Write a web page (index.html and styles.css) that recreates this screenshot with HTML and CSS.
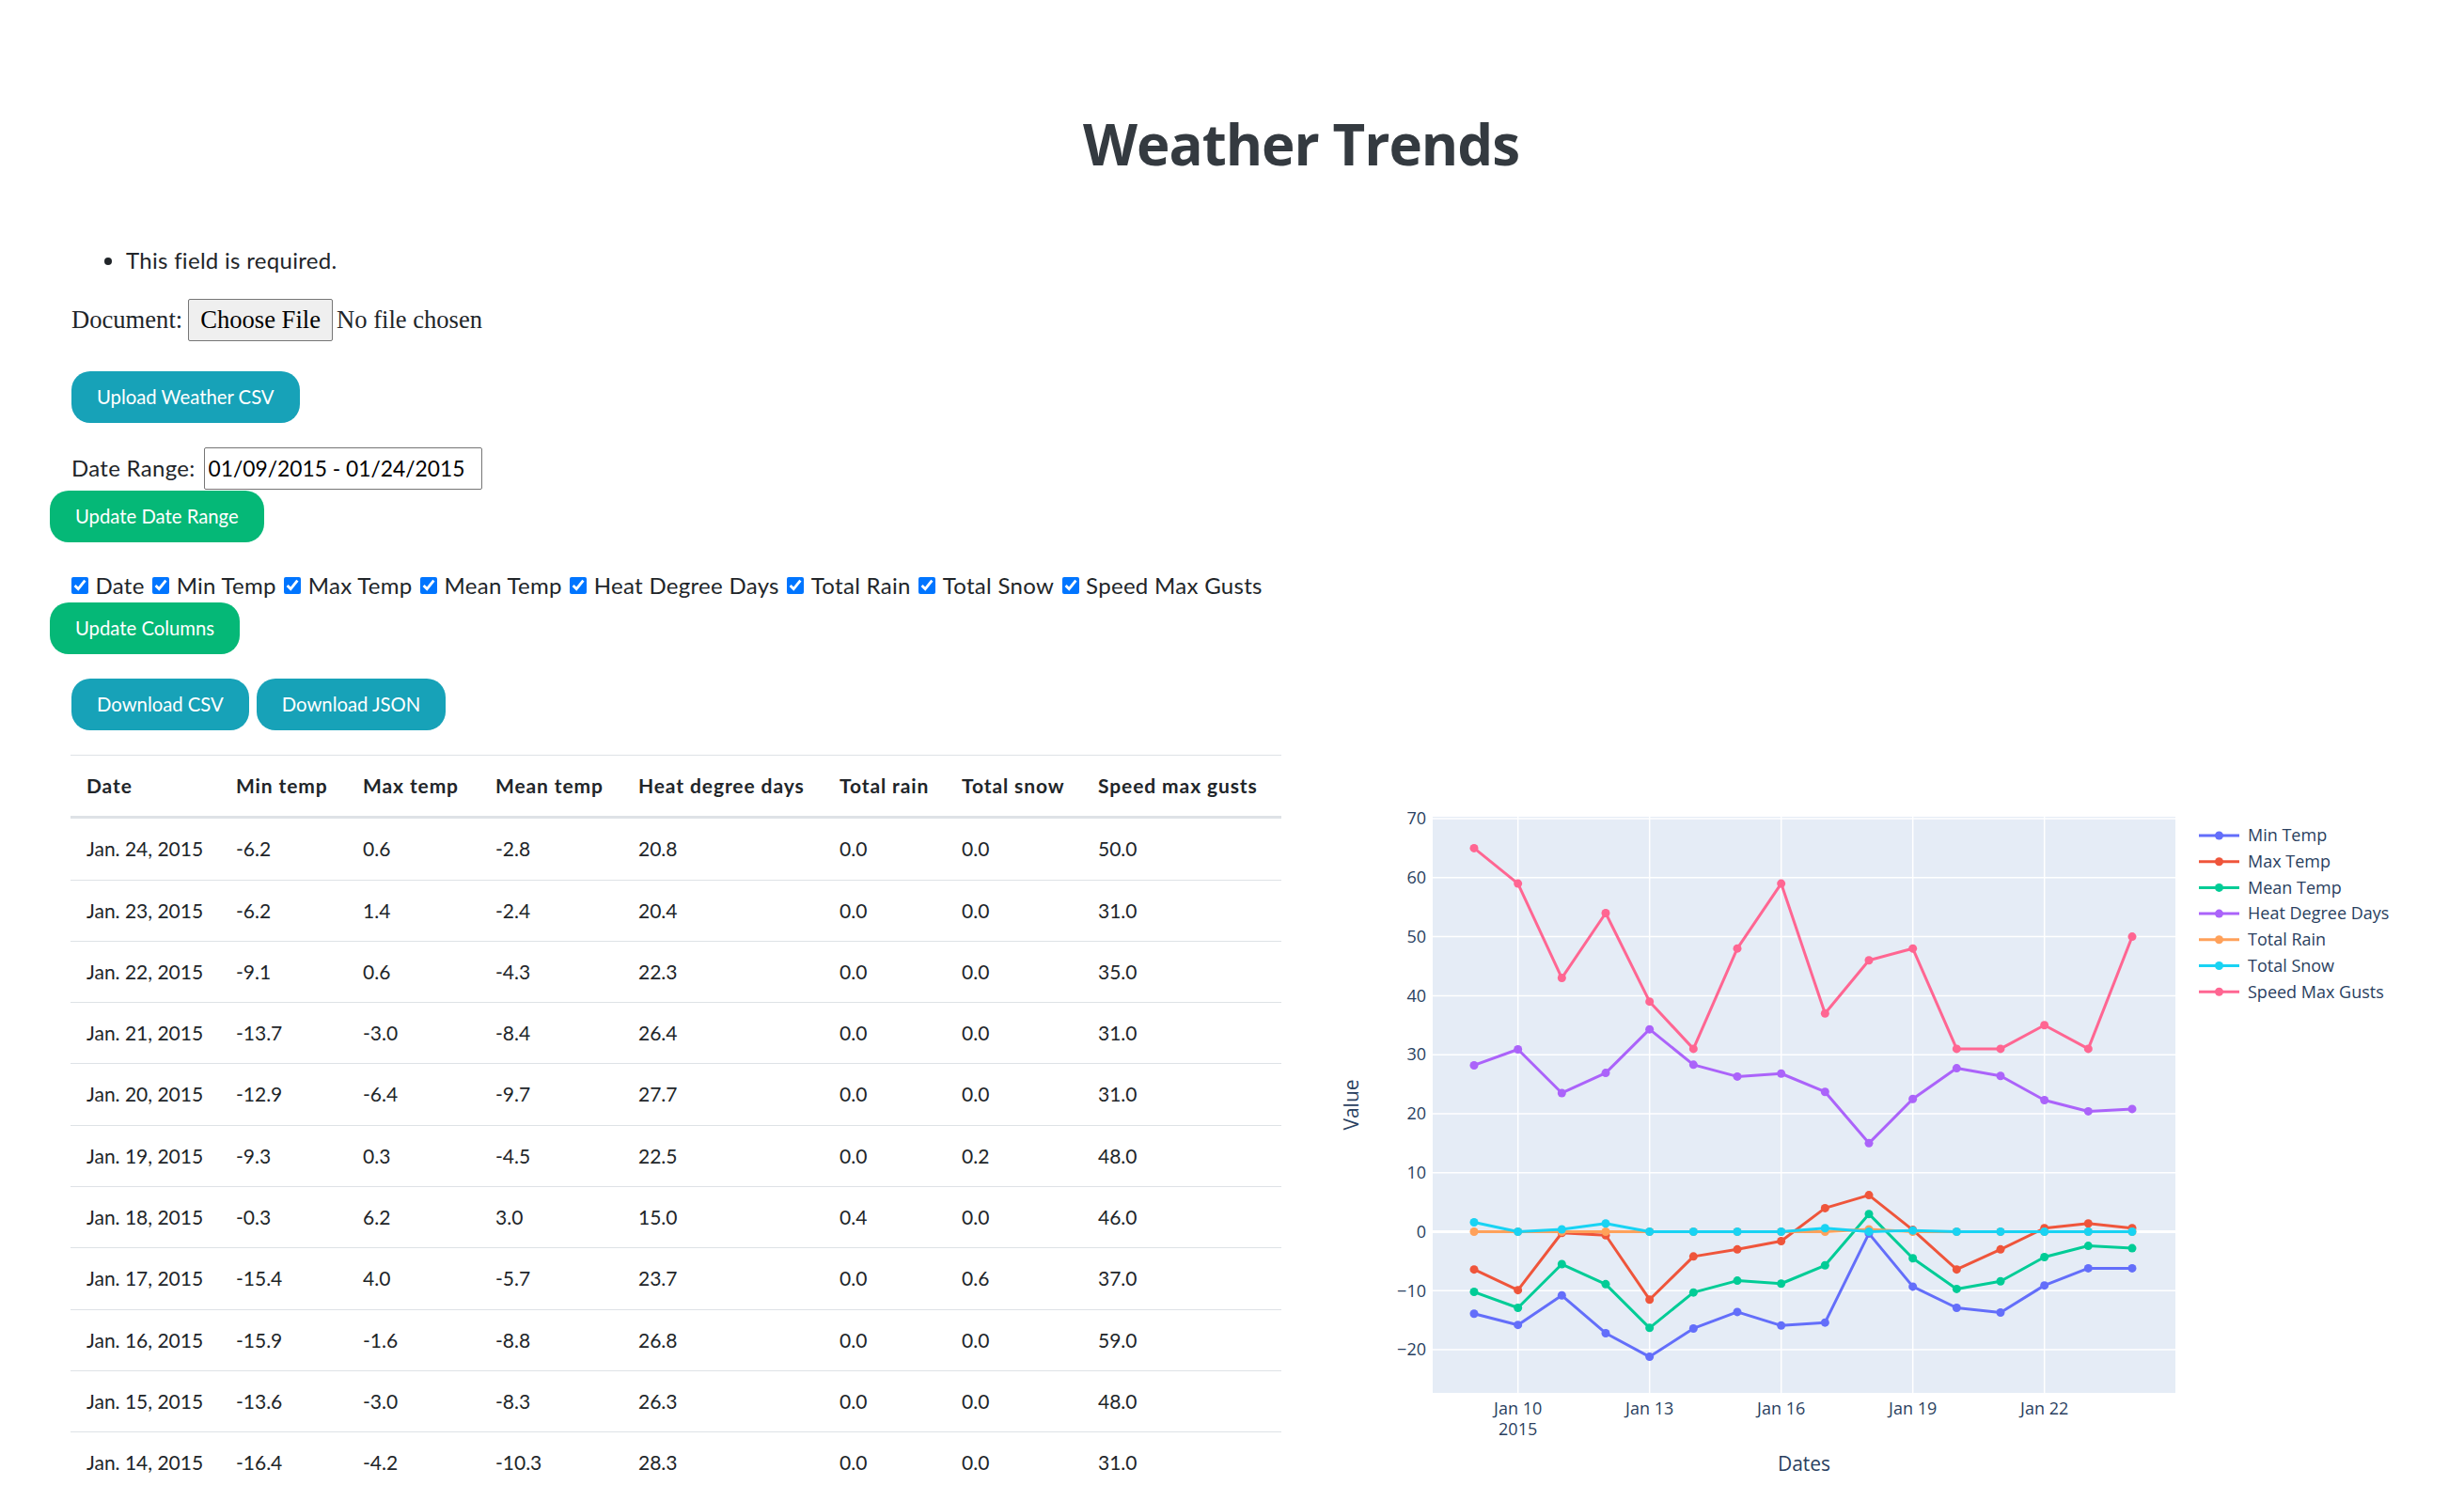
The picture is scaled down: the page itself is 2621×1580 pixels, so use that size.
FILE: index.html
```html
<!DOCTYPE html>
<html lang="en">
<head>
<meta charset="utf-8">
<title>Weather Trends</title>
<link rel="stylesheet" href="styles.css">
</head>
<body>
<header class="page-header"><h1 class="title">Weather Trends</h1></header>
<main class="content">
  <ul class="errorlist"><li>This field is required.</li></ul>
  <form class="upload-form">
    <p class="doc-row"><span class="doc-label">Document:</span><span class="file-btn">Choose File</span><span class="file-name">No file chosen</span></p>
    <button type="button" class="btn btn-info upload-btn">Upload Weather CSV</button>
  </form>
  <form class="range-form">
    <div class="range-row"><label class="range-label">Date Range:</label><input class="range-input" type="text" value="01/09/2015 - 01/24/2015"></div>
    <button type="button" class="btn btn-success btn-shift range-btn">Update Date Range</button>
  </form>
  <form class="cols-form">
    <div class="checks">
      <label class="check"><input type="checkbox" checked><span>Date</span></label>
      <label class="check"><input type="checkbox" checked><span>Min Temp</span></label>
      <label class="check"><input type="checkbox" checked><span>Max Temp</span></label>
      <label class="check"><input type="checkbox" checked><span>Mean Temp</span></label>
      <label class="check"><input type="checkbox" checked><span>Heat Degree Days</span></label>
      <label class="check"><input type="checkbox" checked><span>Total Rain</span></label>
      <label class="check"><input type="checkbox" checked><span>Total Snow</span></label>
      <label class="check"><input type="checkbox" checked><span>Speed Max Gusts</span></label>
    </div>
    <button type="button" class="btn btn-success btn-shift">Update Columns</button>
  </form>
  <div class="downloads">
    <button type="button" class="btn btn-info">Download CSV</button>
    <button type="button" class="btn btn-info">Download JSON</button>
  </div>
  <div class="data-row">
    <table class="data-table">
      <thead>
        <tr><th class="c-date">Date</th><th class="c-min">Min temp</th><th class="c-max">Max temp</th><th class="c-mean">Mean temp</th><th class="c-heat">Heat degree days</th><th class="c-rain">Total rain</th><th class="c-snow">Total snow</th><th class="c-gust">Speed max gusts</th></tr>
      </thead>
      <tbody>
        <tr><td>Jan. 24, 2015</td><td>-6.2</td><td>0.6</td><td>-2.8</td><td>20.8</td><td>0.0</td><td>0.0</td><td>50.0</td></tr>
        <tr><td>Jan. 23, 2015</td><td>-6.2</td><td>1.4</td><td>-2.4</td><td>20.4</td><td>0.0</td><td>0.0</td><td>31.0</td></tr>
        <tr><td>Jan. 22, 2015</td><td>-9.1</td><td>0.6</td><td>-4.3</td><td>22.3</td><td>0.0</td><td>0.0</td><td>35.0</td></tr>
        <tr><td>Jan. 21, 2015</td><td>-13.7</td><td>-3.0</td><td>-8.4</td><td>26.4</td><td>0.0</td><td>0.0</td><td>31.0</td></tr>
        <tr><td>Jan. 20, 2015</td><td>-12.9</td><td>-6.4</td><td>-9.7</td><td>27.7</td><td>0.0</td><td>0.0</td><td>31.0</td></tr>
        <tr><td>Jan. 19, 2015</td><td>-9.3</td><td>0.3</td><td>-4.5</td><td>22.5</td><td>0.0</td><td>0.2</td><td>48.0</td></tr>
        <tr><td>Jan. 18, 2015</td><td>-0.3</td><td>6.2</td><td>3.0</td><td>15.0</td><td>0.4</td><td>0.0</td><td>46.0</td></tr>
        <tr><td>Jan. 17, 2015</td><td>-15.4</td><td>4.0</td><td>-5.7</td><td>23.7</td><td>0.0</td><td>0.6</td><td>37.0</td></tr>
        <tr><td>Jan. 16, 2015</td><td>-15.9</td><td>-1.6</td><td>-8.8</td><td>26.8</td><td>0.0</td><td>0.0</td><td>59.0</td></tr>
        <tr><td>Jan. 15, 2015</td><td>-13.6</td><td>-3.0</td><td>-8.3</td><td>26.3</td><td>0.0</td><td>0.0</td><td>48.0</td></tr>
        <tr><td>Jan. 14, 2015</td><td>-16.4</td><td>-4.2</td><td>-10.3</td><td>28.3</td><td>0.0</td><td>0.0</td><td>31.0</td></tr>
        <tr><td>Jan. 13, 2015</td><td>-21.2</td><td>-11.5</td><td>-16.3</td><td>34.3</td><td>0.0</td><td>0.0</td><td>39.0</td></tr>
        <tr><td>Jan. 12, 2015</td><td>-17.2</td><td>-0.6</td><td>-8.9</td><td>26.9</td><td>0.0</td><td>1.4</td><td>54.0</td></tr>
        <tr><td>Jan. 11, 2015</td><td>-10.8</td><td>-0.2</td><td>-5.5</td><td>23.5</td><td>0.0</td><td>0.4</td><td>43.0</td></tr>
        <tr><td>Jan. 10, 2015</td><td>-15.8</td><td>-9.9</td><td>-12.9</td><td>30.9</td><td>0.0</td><td>0.0</td><td>59.0</td></tr>
        <tr><td>Jan. 9, 2015</td><td>-13.9</td><td>-6.4</td><td>-10.2</td><td>28.2</td><td>0.0</td><td>1.6</td><td>65.0</td></tr>
      </tbody>
    </table>
    <svg class="chart" width="1221" height="777" viewBox="0 0 1221 777" xmlns="http://www.w3.org/2000/svg">
      <rect class="plot-bg" x="124" y="66" width="790" height="613"/>
      <g class="grid">
        <line x1="124" x2="914" y1="633.06" y2="633.06"/>
        <line x1="124" x2="914" y1="570.28" y2="570.28"/>
        <line x1="124" x2="914" y1="444.72" y2="444.72"/>
        <line x1="124" x2="914" y1="381.94" y2="381.94"/>
        <line x1="124" x2="914" y1="319.16" y2="319.16"/>
        <line x1="124" x2="914" y1="256.38" y2="256.38"/>
        <line x1="124" x2="914" y1="193.6" y2="193.6"/>
        <line x1="124" x2="914" y1="130.82" y2="130.82"/>
        <line x1="124" x2="914" y1="68.04" y2="68.04"/>
        <line x1="214.67" x2="214.67" y1="66" y2="679"/>
        <line x1="354.67" x2="354.67" y1="66" y2="679"/>
        <line x1="494.67" x2="494.67" y1="66" y2="679"/>
        <line x1="634.67" x2="634.67" y1="66" y2="679"/>
        <line x1="774.67" x2="774.67" y1="66" y2="679"/>
      </g>
      <line class="zeroline" x1="124" x2="914" y1="507.5" y2="507.5"/>
      <g id="traces"></g>
      <g class="ytick">
        <text x="117" y="74.2">70</text>
        <text x="117" y="137">60</text>
        <text x="117" y="199.8">50</text>
        <text x="117" y="262.6">40</text>
        <text x="117" y="325.4">30</text>
        <text x="117" y="388.1">20</text>
        <text x="117" y="450.9">10</text>
        <text x="117" y="513.7">0</text>
        <text x="117" y="576.5">−10</text>
        <text x="117" y="639.3">−20</text>
      </g>
      <g class="xtick">
        <text x="214.67" y="702">Jan 10</text>
        <text x="214.67" y="723.5">2015</text>
        <text x="354.67" y="702">Jan 13</text>
        <text x="494.67" y="702">Jan 16</text>
        <text x="634.67" y="702">Jan 19</text>
        <text x="774.67" y="702">Jan 22</text>
      </g>
      <text class="axis-title" x="519" y="762" text-anchor="middle">Dates</text>
      <text class="axis-title" x="44.5" y="372.5" text-anchor="middle" transform="rotate(-90 44.5 372.5)">Value</text>
      <g class="legend">
        <g class="leg-item"><line x1="939" x2="982" y1="86" y2="86" stroke="#636efa"/><circle cx="960.5" cy="86" r="4.5" fill="#636efa"/><text x="991" y="92.3">Min Temp</text></g>
        <g class="leg-item"><line x1="939" x2="982" y1="113.7" y2="113.7" stroke="#ef553b"/><circle cx="960.5" cy="113.7" r="4.5" fill="#ef553b"/><text x="991" y="120">Max Temp</text></g>
        <g class="leg-item"><line x1="939" x2="982" y1="141.4" y2="141.4" stroke="#00cc96"/><circle cx="960.5" cy="141.4" r="4.5" fill="#00cc96"/><text x="991" y="147.7">Mean Temp</text></g>
        <g class="leg-item"><line x1="939" x2="982" y1="169.1" y2="169.1" stroke="#ab63fa"/><circle cx="960.5" cy="169.1" r="4.5" fill="#ab63fa"/><text x="991" y="175.4">Heat Degree Days</text></g>
        <g class="leg-item"><line x1="939" x2="982" y1="196.8" y2="196.8" stroke="#ffa15a"/><circle cx="960.5" cy="196.8" r="4.5" fill="#ffa15a"/><text x="991" y="203.1">Total Rain</text></g>
        <g class="leg-item"><line x1="939" x2="982" y1="224.5" y2="224.5" stroke="#19d3f3"/><circle cx="960.5" cy="224.5" r="4.5" fill="#19d3f3"/><text x="991" y="230.8">Total Snow</text></g>
        <g class="leg-item"><line x1="939" x2="982" y1="252.2" y2="252.2" stroke="#ff6692"/><circle cx="960.5" cy="252.2" r="4.5" fill="#ff6692"/><text x="991" y="258.5">Speed Max Gusts</text></g>
      </g>
    </svg>
  </div>
</main>
<script src="script.js"></script>
</body>
</html>
```

FILE: styles.css
```css
* { box-sizing: border-box; }
html, body { margin: 0; padding: 0; background: #fff; }
body {
  font-family: Lato, "Open Sans", sans-serif;
  font-size: 24px;
  line-height: 36px;
  color: #212529;
}
.page-header { padding: 116.8px 0 0 147px; text-align: center; }
.title {
  margin: 0;
  font-family: "Open Sans", sans-serif;
  font-size: 60px;
  line-height: 72px;
  font-weight: 700;
  letter-spacing: -1px;
  color: #343a40;
}
.content { padding-left: 75px; }
.errorlist { margin: 69.9px 0 0; padding-left: 59px; letter-spacing: 0.3px; }
form { margin: 0; }
.doc-row {
  display: flex;
  align-items: baseline;
  margin: 23.3px 0 0;
  font-family: "Liberation Serif", serif;
  font-size: 26.6px;
  line-height: 31px;
}
.doc-label { margin: 0 6px 0 1px; }
.file-btn {
  padding: 6px 12px;
  border: 1px solid #767676;
  border-radius: 2px;
  background: #efefef;
  color: #000;
  margin-right: 4px;
}
.btn {
  display: flex;
  width: max-content;
  align-items: center;
  height: 55px;
  padding: 0 27px;
  border: 0;
  border-radius: 20px;
  color: #fff;
  font-family: Lato, "Open Sans", sans-serif;
  font-size: 20.3px;
  line-height: 32px;
}
.btn-info { background: #17a2b8; }
.btn-success { background: #05b877; }
.upload-btn { margin-top: 32px; margin-left: 1px; }
.range-row { display: flex; align-items: baseline; margin-top: 26px; }
.range-label { margin: 0 9px 0 1px; letter-spacing: 0.3px; }
.range-input {
  width: 296px;
  height: 45px;
  border: 1px solid #767676;
  border-radius: 2px;
  padding: 0 4px;
  font-family: Lato, "Open Sans", sans-serif;
  font-size: 22.8px;
  color: #000;
  background: #fff;
}
.btn-shift { margin-left: -22px; }
.range-btn { margin-top: 1px; }
.checks {
  display: flex;
  align-items: center;
  gap: 8.5px;
  height: 36px;
  margin: 28px 0 0 1px;
  letter-spacing: 0.3px;
}
.check { display: inline-flex; align-items: center; gap: 7.5px; }
.check input { width: 18px; height: 18px; margin: 0; accent-color: #0075ff; }
.downloads { display: flex; gap: 8px; margin: 26px 0 0 1px; }
.data-row { display: flex; align-items: flex-start; margin-top: 26px; }
.data-table {
  flex: none;
  width: 1288px;
  border-collapse: collapse;
  table-layout: fixed;
  font-size: 21px;
  line-height: 32.3px;
  color: #212529;
}
.data-table th, .data-table td {
  padding: 16px 17px;
  text-align: left;
  vertical-align: top;
  border-top: 1px solid #dee2e6;
  white-space: nowrap;
}
.data-table th { font-weight: 700; letter-spacing: 0.9px; border-bottom: 3px solid #dee2e6; }
.c-date { width: 159px; }
.c-min { width: 135px; }
.c-max { width: 141px; }
.c-mean { width: 152px; }
.c-heat { width: 214px; }
.c-rain { width: 130px; }
.c-snow { width: 145px; }
.c-gust { width: 212px; }
.chart { flex: none; display: block; margin-left: 37px; }
.plot-bg { fill: #e5ecf6; }
.grid line { stroke: #fff; stroke-width: 1.5; }
.zeroline { stroke: #fff; stroke-width: 3; }
.ytick text, .xtick text, .legend text, .axis-title {
  font-family: "Open Sans", sans-serif;
  fill: #2a3f5f;
}
.ytick text { font-size: 18px; text-anchor: end; }
.xtick text { font-size: 18px; text-anchor: middle; }
.legend text { font-size: 18px; }
.legend line { stroke-width: 3; }
.axis-title { font-size: 21px; }
.trace-line { fill: none; stroke-width: 3; stroke-linejoin: round; }
```

FILE: script.js
```js
(function () {
  var NS = 'http://www.w3.org/2000/svg';
  var X0 = 168, DX = 46.6667, Y0 = 507.5, DY = 6.278;
  var series = [
    { color: '#636efa', data: [-13.9, -15.8, -10.8, -17.2, -21.2, -16.4, -13.6, -15.9, -15.4, -0.3, -9.3, -12.9, -13.7, -9.1, -6.2, -6.2] },
    { color: '#ef553b', data: [-6.4, -9.9, -0.2, -0.6, -11.5, -4.2, -3.0, -1.6, 4.0, 6.2, 0.3, -6.4, -3.0, 0.6, 1.4, 0.6] },
    { color: '#00cc96', data: [-10.2, -12.9, -5.5, -8.9, -16.3, -10.3, -8.3, -8.8, -5.7, 3.0, -4.5, -9.7, -8.4, -4.3, -2.4, -2.8] },
    { color: '#ab63fa', data: [28.2, 30.9, 23.5, 26.9, 34.3, 28.3, 26.3, 26.8, 23.7, 15.0, 22.5, 27.7, 26.4, 22.3, 20.4, 20.8] },
    { color: '#ffa15a', data: [0, 0, 0, 0, 0, 0, 0, 0, 0, 0.4, 0, 0, 0, 0, 0, 0] },
    { color: '#19d3f3', data: [1.6, 0, 0.4, 1.4, 0, 0, 0, 0, 0.6, 0, 0.2, 0, 0, 0, 0, 0] },
    { color: '#ff6692', data: [65, 59, 43, 54, 39, 31, 48, 59, 37, 46, 48, 31, 31, 35, 31, 50] }
  ];
  var g = document.getElementById('traces');
  series.forEach(function (s) {
    var grp = document.createElementNS(NS, 'g');
    var pts = s.data.map(function (v, i) { return [X0 + i * DX, Y0 - v * DY]; });
    var pl = document.createElementNS(NS, 'polyline');
    pl.setAttribute('class', 'trace-line');
    pl.setAttribute('stroke', s.color);
    pl.setAttribute('points', pts.map(function (p) { return p[0].toFixed(2) + ',' + p[1].toFixed(2); }).join(' '));
    grp.appendChild(pl);
    pts.forEach(function (p) {
      var c = document.createElementNS(NS, 'circle');
      c.setAttribute('cx', p[0].toFixed(2));
      c.setAttribute('cy', p[1].toFixed(2));
      c.setAttribute('r', '4.5');
      c.setAttribute('fill', s.color);
      grp.appendChild(c);
    });
    g.appendChild(grp);
  });
})();
```
